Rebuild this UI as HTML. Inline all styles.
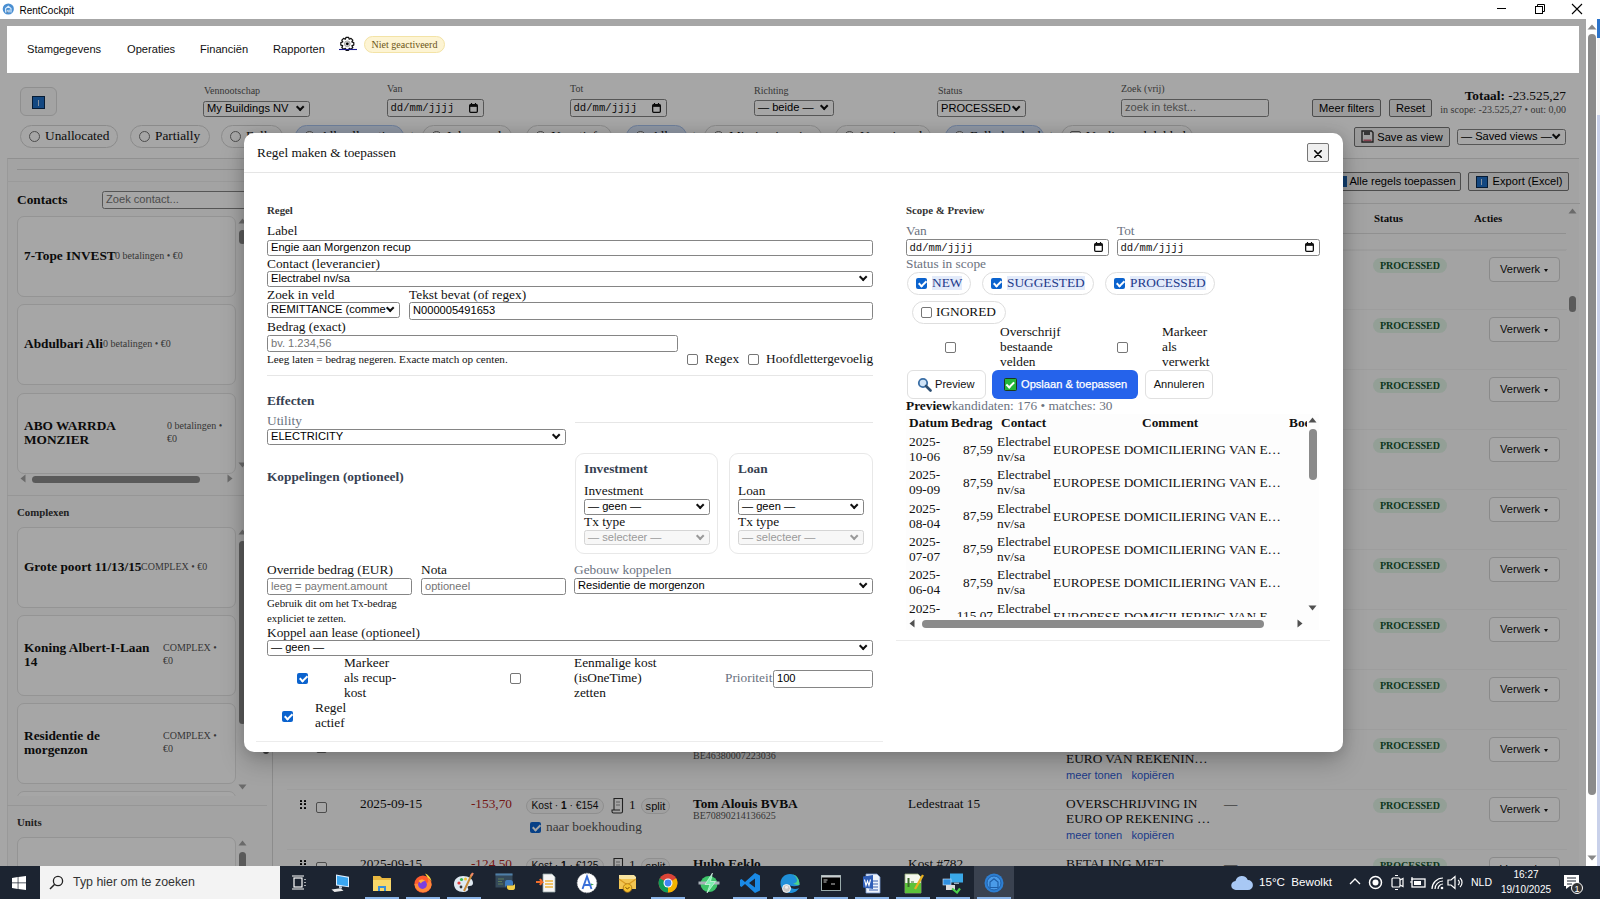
<!DOCTYPE html><html><head><meta charset="utf-8"><style>
*{box-sizing:border-box;margin:0;padding:0}
html,body{width:1600px;height:899px;overflow:hidden;background:#fff;font-family:"Liberation Serif",serif;color:#111}
.a{position:absolute;white-space:nowrap}
.sans{font-family:"Liberation Sans",sans-serif}
.mono{font-family:"Liberation Mono",monospace}
.inp{position:absolute;border:1px solid #858585;border-radius:2.5px;background:#fff;font-family:"Liberation Sans",sans-serif;font-size:11.11px;color:#000;white-space:nowrap;overflow:hidden;padding-left:3px}
.sel::after{content:"";position:absolute;right:5.5px;top:50%;margin-top:-4.8px;width:4.4px;height:4.4px;border-right:2.1px solid #111;border-bottom:2.1px solid #111;transform:rotate(45deg)}
.dis{border-color:#d5d5d5;background:#f7f7f7;color:#9a9a9a}
.dis::after{border-color:#9a9a9a}
.ph{color:#757575}
.lbl{position:absolute;font-size:13.33px;line-height:15px;white-space:nowrap}
.btn{position:absolute;border:1px solid #767676;border-radius:2px;background:#efefef;font-family:"Liberation Sans",sans-serif;font-size:11.11px;text-align:center;white-space:nowrap;color:#000}
.cb{position:absolute;width:11px;height:11px;border:1px solid #767676;border-radius:2px;background:#fff}
.cbc{position:absolute;width:11px;height:11px;border-radius:2px;background:#0b63ce}
.cbc::after{content:"";position:absolute;left:3.5px;top:1px;width:3.2px;height:6.2px;border-right:2.1px solid #fff;border-bottom:2.1px solid #fff;transform:rotate(45deg)}
.pill{position:absolute;border:1px solid #d6d6d6;border-radius:12px;background:#fff}
.radio{position:absolute;width:11px;height:11px;border:1px solid #767676;border-radius:50%;background:#fff}
.card{position:absolute;border:1px solid #e3e3e3;border-radius:7px;background:#fff}
.badge{position:absolute;background:#e2f4e7;color:#14532d;border-radius:8px;font-size:10px;font-weight:bold;text-align:center;line-height:15px}
.vbtn{position:absolute;border:1px solid #d4d4d4;border-radius:4px;background:#fff;font-family:"Liberation Sans",sans-serif;font-size:11.11px;color:#111}

</style></head><body><div class="a" style="left:0;top:0;width:1586px;height:866px;background:#fff;overflow:hidden">
<div class="a" style="left:7px;top:158px;width:1572px;height:708px;background:#fbfbfb;border-top:1px solid #dedede;border-left:1px solid #ececec"></div>
<div class="a" style="left:20px;top:87px;width:37px;height:29px;background:#fafafa;border:1px solid #dcdcdc;border-radius:6px"></div>
<div class="a" style="left:32px;top:96px;width:13px;height:13px;background:#1f6fc6;border:1px solid #0a2a50"></div>
<div class="a" style="left:38px;top:100px;width:1px;height:6px;background:#cfe0f5"></div>
<div class="a" style="left:204px;top:84.7px;font-size:10px;line-height:12px;color:#555;font-weight:normal;">Vennootschap</div>
<div class="inp sel" style="left:203px;top:101px;width:107px;height:16px;line-height:13px;">My Buildings NV</div>
<div class="a" style="left:387px;top:83.2px;font-size:10px;line-height:12px;color:#555;font-weight:normal;">Van</div>
<div class="inp date" style="left:387px;top:99px;width:97px;height:18px;line-height:15px;padding-left:2.5px"><span class="mono" style="font-size:10.6px;color:#111">dd/mm/jjjj</span><svg class="a" style="right:5px;top:50%;margin-top:-5.5px" width="9" height="10" viewBox="0 0 9 10"><path d="M2.5 0v2M6.5 0v2" stroke="#111" stroke-width="1.2"/><rect x=".65" y="1.65" width="7.7" height="7.7" rx="1" fill="none" stroke="#111" stroke-width="1.3"/><rect x=".65" y="1.65" width="7.7" height="2.2" fill="#111"/></svg></div>
<div class="a" style="left:570px;top:83.2px;font-size:10px;line-height:12px;color:#555;font-weight:normal;">Tot</div>
<div class="inp date" style="left:570px;top:99px;width:97px;height:18px;line-height:15px;padding-left:2.5px"><span class="mono" style="font-size:10.6px;color:#111">dd/mm/jjjj</span><svg class="a" style="right:5px;top:50%;margin-top:-5.5px" width="9" height="10" viewBox="0 0 9 10"><path d="M2.5 0v2M6.5 0v2" stroke="#111" stroke-width="1.2"/><rect x=".65" y="1.65" width="7.7" height="7.7" rx="1" fill="none" stroke="#111" stroke-width="1.3"/><rect x=".65" y="1.65" width="7.7" height="2.2" fill="#111"/></svg></div>
<div class="a" style="left:754px;top:84.7px;font-size:10px;line-height:12px;color:#555;font-weight:normal;">Richting</div>
<div class="inp sel" style="left:754px;top:100px;width:80px;height:16px;line-height:13px;">— beide —</div>
<div class="a" style="left:938px;top:84.7px;font-size:10px;line-height:12px;color:#555;font-weight:normal;">Status</div>
<div class="inp sel" style="left:937px;top:100px;width:89px;height:17px;line-height:14px;">PROCESSED</div>
<div class="a" style="left:1121px;top:83.2px;font-size:10px;line-height:12px;color:#555;font-weight:normal;">Zoek (vrij)</div>
<div class="inp " style="left:1121px;top:99px;width:148px;height:18px;line-height:15px;"><span class="ph">zoek in tekst...</span></div>
<div class="btn" style="left:1312px;top:99px;width:69px;height:18px;line-height:16px">Meer filters</div>
<div class="btn" style="left:1389px;top:99px;width:43px;height:18px;line-height:16px">Reset</div>
<div class="a" style="left:1380px;top:88px;width:186px;text-align:right;font-size:13.33px;line-height:16px;color:#111"><b>Totaal:</b> -23.525,27</div>
<div class="a" style="left:1380px;top:103px;width:186px;text-align:right;font-size:10px;line-height:13px;color:#555">in scope: -23.525,27 • out: 0,00</div>
<div class="pill" style="left:20px;top:125px;width:98px;height:23px;"></div>
<div class="radio" style="left:29px;top:131px"></div>
<div class="a" style="left:45px;top:128.2px;font-size:13.33px;line-height:15px;color:#111;font-weight:normal;">Unallocated</div>
<div class="pill" style="left:130px;top:125px;width:80px;height:23px;"></div>
<div class="radio" style="left:139px;top:131px"></div>
<div class="a" style="left:155px;top:128.2px;font-size:13.33px;line-height:15px;color:#111;font-weight:normal;">Partially</div>
<div class="pill" style="left:221px;top:125px;width:62px;height:23px;"></div>
<div class="radio" style="left:230px;top:131px"></div>
<div class="a" style="left:246px;top:128.2px;font-size:13.33px;line-height:15px;color:#111;font-weight:normal;">Fully</div>
<div class="pill" style="left:295px;top:125px;width:109px;height:23px;background:#dbe7fb;border-color:#a9c3ee;"></div>
<div class="radio" style="left:304px;top:131px"></div>
<div class="a" style="left:320px;top:128.2px;font-size:13.33px;line-height:15px;color:#111;font-weight:normal;">Alle allocaties</div>
<div class="a" style="left:411px;top:128.7px;font-size:11px;line-height:13px;color:#777;font-weight:normal;">|</div>
<div class="pill" style="left:422px;top:125px;width:90px;height:23px;"></div>
<div class="radio" style="left:431px;top:131px"></div>
<div class="a" style="left:447px;top:128.2px;font-size:13.33px;line-height:15px;color:#111;font-weight:normal;">Inkomend</div>
<div class="pill" style="left:526px;top:125px;width:86px;height:23px;"></div>
<div class="radio" style="left:535px;top:131px"></div>
<div class="a" style="left:551px;top:128.2px;font-size:13.33px;line-height:15px;color:#111;font-weight:normal;">Negatief</div>
<div class="pill" style="left:626px;top:125px;width:61px;height:23px;background:#dbe7fb;border-color:#a9c3ee;"></div>
<div class="radio" style="left:635px;top:131px"></div>
<div class="a" style="left:651px;top:128.2px;font-size:13.33px;line-height:15px;color:#111;font-weight:normal;">Alle</div>
<div class="a" style="left:693px;top:128.7px;font-size:11px;line-height:13px;color:#777;font-weight:normal;">|</div>
<div class="pill" style="left:704px;top:125px;width:118px;height:23px;"></div>
<div class="radio" style="left:713px;top:131px"></div>
<div class="a" style="left:729px;top:128.2px;font-size:13.33px;line-height:15px;color:#111;font-weight:normal;">Missing invoice</div>
<div class="pill" style="left:835px;top:125px;width:96px;height:23px;"></div>
<div class="radio" style="left:844px;top:131px"></div>
<div class="a" style="left:860px;top:128.2px;font-size:13.33px;line-height:15px;color:#111;font-weight:normal;">Unassigned</div>
<div class="pill" style="left:945px;top:125px;width:99px;height:23px;background:#dbe7fb;border-color:#a9c3ee;"></div>
<div class="radio" style="left:954px;top:131px"></div>
<div class="a" style="left:970px;top:128.2px;font-size:13.33px;line-height:15px;color:#111;font-weight:normal;">Fully booked</div>
<div class="a" style="left:1050px;top:128.7px;font-size:11px;line-height:13px;color:#777;font-weight:normal;">|</div>
<div class="pill" style="left:1061px;top:125px;width:132px;height:23px"></div>
<div class="cb" style="left:1070px;top:131px"></div>
<div class="a" style="left:1086px;top:128.2px;font-size:13.33px;line-height:15px;color:#111;font-weight:normal;">Verdienend dubbel</div>
<div class="btn" style="left:1354px;top:127px;width:96px;height:20px;line-height:18px;padding-left:16px">Save as view</div>
<svg class="a" style="left:1361px;top:130px" width="13" height="13" viewBox="0 0 13 13"><path d="M1 1h9.5L12 2.5V12H1z" fill="#f4f4f4" stroke="#333" stroke-width="1.4"/><rect x="3" y="1" width="6" height="4" fill="#555"/><rect x="2.5" y="9.5" width="8" height="1.6" fill="#d0667a"/></svg>
<div class="inp sel" style="left:1457px;top:129px;width:109px;height:16px;line-height:13px;">— Saved views —</div>
<div class="a" style="left:17px;top:169px;width:255px;height:1px;background:#dadada"></div>
<div class="a" style="left:7px;top:181px;width:265px;height:1px;background:#ededed"></div>
<div class="a" style="left:272px;top:181px;width:1px;height:685px;background:#d8d8d8"></div>
<div class="a" style="left:17px;top:192.2px;font-size:13.33px;line-height:15px;color:#111;font-weight:bold;">Contacts</div>
<div class="inp " style="left:102px;top:191px;width:160px;height:18px;line-height:15px;"><span class="ph">Zoek contact...</span></div>
<div class="card" style="left:17px;top:216px;width:219px;height:81px"></div>
<div class="a" style="left:24px;top:248.2px;font-size:13.33px;line-height:15px;color:#111;font-weight:bold;">7-Tope INVEST</div>
<div class="a" style="left:115px;top:249.7px;font-size:10px;line-height:12px;color:#555;font-weight:normal;">0 betalingen • €0</div>
<div class="card" style="left:17px;top:304px;width:219px;height:81px"></div>
<div class="a" style="left:24px;top:336.2px;font-size:13.33px;line-height:15px;color:#111;font-weight:bold;">Abdulbari Ali</div>
<div class="a" style="left:103px;top:337.7px;font-size:10px;line-height:12px;color:#555;font-weight:normal;">0 betalingen • €0</div>
<div class="card" style="left:17px;top:393px;width:219px;height:81px"></div>
<div class="a" style="left:24px;top:417.7px;font-size:13.33px;line-height:15px;color:#111;font-weight:bold;">ABO WARRDA</div>
<div class="a" style="left:24px;top:432.2px;font-size:13.33px;line-height:15px;color:#111;font-weight:bold;">MONZIER</div>
<div class="a" style="left:167px;top:419.7px;font-size:10px;line-height:12px;color:#555;font-weight:normal;">0 betalingen •</div>
<div class="a" style="left:167px;top:432.7px;font-size:10px;line-height:12px;color:#555;font-weight:normal;">€0</div>
<svg class="a" style="left:238px;top:218px" width="9" height="6"><path d="M0.5 5.5L4.5 0.5L8.5 5.5z" fill="#a3a3a3"/></svg>
<div class="a" style="left:239px;top:230px;width:7px;height:14px;background:#8a8a8a;border-radius:4px"></div>
<svg class="a" style="left:238px;top:462px" width="9" height="6"><path d="M0.5 0.5L4.5 5.5L8.5 0.5z" fill="#a3a3a3"/></svg>
<svg class="a" style="left:20px;top:474px" width="6" height="9"><path d="M5.5 0.5L0.5 4.5L5.5 8.5z" fill="#a3a3a3"/></svg>
<div class="a" style="left:32px;top:476px;width:168px;height:7px;background:#8a8a8a;border-radius:4px"></div>
<svg class="a" style="left:227px;top:474px" width="6" height="9"><path d="M0.5 0.5L5.5 4.5L0.5 8.5z" fill="#a3a3a3"/></svg>
<div class="a" style="left:7px;top:495px;width:260px;height:1px;background:#e6e6e6"></div>
<div class="a" style="left:17px;top:505.7px;font-size:10.83px;line-height:12px;color:#333;font-weight:bold;">Complexen</div>
<div class="card" style="left:17px;top:527px;width:219px;height:81px"></div>
<div class="a" style="left:24px;top:559.2px;font-size:13.33px;line-height:15px;color:#111;font-weight:bold;">Grote poort 11/13/15</div>
<div class="a" style="left:141px;top:560.7px;font-size:10px;line-height:12px;color:#555;font-weight:normal;">COMPLEX • €0</div>
<div class="card" style="left:17px;top:615px;width:219px;height:81px"></div>
<div class="a" style="left:24px;top:639.7px;font-size:13.33px;line-height:15px;color:#111;font-weight:bold;">Koning Albert-I-Laan</div>
<div class="a" style="left:24px;top:654.2px;font-size:13.33px;line-height:15px;color:#111;font-weight:bold;">14</div>
<div class="a" style="left:163px;top:641.7px;font-size:10px;line-height:12px;color:#555;font-weight:normal;">COMPLEX •</div>
<div class="a" style="left:163px;top:654.7px;font-size:10px;line-height:12px;color:#555;font-weight:normal;">€0</div>
<div class="card" style="left:17px;top:703px;width:219px;height:81px"></div>
<div class="a" style="left:24px;top:727.7px;font-size:13.33px;line-height:15px;color:#111;font-weight:bold;">Residentie de</div>
<div class="a" style="left:24px;top:742.2px;font-size:13.33px;line-height:15px;color:#111;font-weight:bold;">morgenzon</div>
<div class="a" style="left:163px;top:729.7px;font-size:10px;line-height:12px;color:#555;font-weight:normal;">COMPLEX •</div>
<div class="a" style="left:163px;top:742.7px;font-size:10px;line-height:12px;color:#555;font-weight:normal;">€0</div>
<div class="a" style="left:17px;top:791px;width:219px;height:5px;overflow:hidden"><div class="card" style="left:0;top:0;width:219px;height:40px"></div></div>
<svg class="a" style="left:238px;top:529px" width="9" height="6"><path d="M0.5 5.5L4.5 0.5L8.5 5.5z" fill="#a3a3a3"/></svg>
<div class="a" style="left:239px;top:541px;width:7px;height:183px;background:#8a8a8a;border-radius:4px"></div>
<svg class="a" style="left:238px;top:784px" width="9" height="6"><path d="M0.5 0.5L4.5 5.5L8.5 0.5z" fill="#a3a3a3"/></svg>
<div class="a" style="left:7px;top:805px;width:260px;height:1px;background:#e6e6e6"></div>
<div class="a" style="left:263px;top:690px;width:6px;height:64px;background:#5c5c5c;border-radius:3px"></div>
<div class="a" style="left:17px;top:816.2px;font-size:10.83px;line-height:12px;color:#333;font-weight:bold;">Units</div>
<div class="card" style="left:17px;top:837px;width:219px;height:60px"></div>
<svg class="a" style="left:238px;top:840px" width="9" height="6"><path d="M0.5 5.5L4.5 0.5L8.5 5.5z" fill="#a3a3a3"/></svg>
<div class="a" style="left:239px;top:852px;width:7px;height:20px;background:#8a8a8a;border-radius:4px"></div>
<div class="btn" style="left:1330px;top:172px;width:131px;height:19px;line-height:17px;padding-left:14px">Alle regels toepassen</div>
<div class="a" style="left:1337px;top:176px;width:10px;height:11px;background:#1b5fa8"></div>
<div class="btn" style="left:1468px;top:172px;width:101px;height:19px;line-height:17px;padding-left:18px">Export (Excel)</div>
<div class="a" style="left:1476px;top:176px;width:12px;height:12px;background:#1f6fc6;border:1px solid #0a2a50"></div>
<div class="a" style="left:1481px;top:179px;width:1px;height:6px;background:#cfe0f5"></div>
<div class="a" style="left:1343px;top:203px;width:237px;height:1px;background:#dedede"></div>
<div class="a" style="left:282px;top:233px;width:1284px;height:1px;background:#dedede"></div>
<div class="a" style="left:1374px;top:211.7px;font-size:10.83px;line-height:12px;color:#111;font-weight:bold;">Status</div>
<div class="a" style="left:1474px;top:211.7px;font-size:10.83px;line-height:12px;color:#111;font-weight:bold;">Acties</div>
<svg class="a" style="left:1568px;top:208px" width="9" height="6"><path d="M0.5 5.5L4.5 0.5L8.5 5.5z" fill="#a3a3a3"/></svg>
<div class="a" style="left:1569px;top:296px;width:7px;height:16px;background:#8a8a8a;border-radius:4px"></div>
<div class="a" style="left:282px;top:250px;width:1284px;height:1px;background:#f0f0f0"></div>
<div class="a" style="left:287px;top:249px;width:1280px;height:1px;background:#f1f1f1"></div>
<div class="badge" style="left:1373px;top:258px;width:74px;height:15px">PROCESSED</div>
<div class="vbtn" style="left:1489px;top:257px;width:71px;height:25px;line-height:23px;padding-left:10px">Verwerk</div>
<div class="a" style="left:1544px;top:268.5px;width:0px;height:0px;border-left:2.5px solid transparent;border-right:2.5px solid transparent;border-top:3px solid #111"></div>
<div class="a" style="left:287px;top:309px;width:1280px;height:1px;background:#f1f1f1"></div>
<div class="badge" style="left:1373px;top:318px;width:74px;height:15px">PROCESSED</div>
<div class="vbtn" style="left:1489px;top:317px;width:71px;height:25px;line-height:23px;padding-left:10px">Verwerk</div>
<div class="a" style="left:1544px;top:328.5px;width:0px;height:0px;border-left:2.5px solid transparent;border-right:2.5px solid transparent;border-top:3px solid #111"></div>
<div class="a" style="left:287px;top:369px;width:1280px;height:1px;background:#f1f1f1"></div>
<div class="badge" style="left:1373px;top:378px;width:74px;height:15px">PROCESSED</div>
<div class="vbtn" style="left:1489px;top:377px;width:71px;height:25px;line-height:23px;padding-left:10px">Verwerk</div>
<div class="a" style="left:1544px;top:388.5px;width:0px;height:0px;border-left:2.5px solid transparent;border-right:2.5px solid transparent;border-top:3px solid #111"></div>
<div class="a" style="left:287px;top:429px;width:1280px;height:1px;background:#f1f1f1"></div>
<div class="badge" style="left:1373px;top:438px;width:74px;height:15px">PROCESSED</div>
<div class="vbtn" style="left:1489px;top:437px;width:71px;height:25px;line-height:23px;padding-left:10px">Verwerk</div>
<div class="a" style="left:1544px;top:448.5px;width:0px;height:0px;border-left:2.5px solid transparent;border-right:2.5px solid transparent;border-top:3px solid #111"></div>
<div class="a" style="left:287px;top:489px;width:1280px;height:1px;background:#f1f1f1"></div>
<div class="badge" style="left:1373px;top:498px;width:74px;height:15px">PROCESSED</div>
<div class="vbtn" style="left:1489px;top:497px;width:71px;height:25px;line-height:23px;padding-left:10px">Verwerk</div>
<div class="a" style="left:1544px;top:508.5px;width:0px;height:0px;border-left:2.5px solid transparent;border-right:2.5px solid transparent;border-top:3px solid #111"></div>
<div class="a" style="left:287px;top:549px;width:1280px;height:1px;background:#f1f1f1"></div>
<div class="badge" style="left:1373px;top:558px;width:74px;height:15px">PROCESSED</div>
<div class="vbtn" style="left:1489px;top:557px;width:71px;height:25px;line-height:23px;padding-left:10px">Verwerk</div>
<div class="a" style="left:1544px;top:568.5px;width:0px;height:0px;border-left:2.5px solid transparent;border-right:2.5px solid transparent;border-top:3px solid #111"></div>
<div class="a" style="left:287px;top:609px;width:1280px;height:1px;background:#f1f1f1"></div>
<div class="badge" style="left:1373px;top:618px;width:74px;height:15px">PROCESSED</div>
<div class="vbtn" style="left:1489px;top:617px;width:71px;height:25px;line-height:23px;padding-left:10px">Verwerk</div>
<div class="a" style="left:1544px;top:628.5px;width:0px;height:0px;border-left:2.5px solid transparent;border-right:2.5px solid transparent;border-top:3px solid #111"></div>
<div class="a" style="left:287px;top:669px;width:1280px;height:1px;background:#f1f1f1"></div>
<div class="badge" style="left:1373px;top:678px;width:74px;height:15px">PROCESSED</div>
<div class="vbtn" style="left:1489px;top:677px;width:71px;height:25px;line-height:23px;padding-left:10px">Verwerk</div>
<div class="a" style="left:1544px;top:688.5px;width:0px;height:0px;border-left:2.5px solid transparent;border-right:2.5px solid transparent;border-top:3px solid #111"></div>
<div class="a" style="left:287px;top:729px;width:1280px;height:1px;background:#f1f1f1"></div>
<div class="badge" style="left:1373px;top:738px;width:74px;height:15px">PROCESSED</div>
<div class="vbtn" style="left:1489px;top:737px;width:71px;height:25px;line-height:23px;padding-left:10px">Verwerk</div>
<div class="a" style="left:1544px;top:748.5px;width:0px;height:0px;border-left:2.5px solid transparent;border-right:2.5px solid transparent;border-top:3px solid #111"></div>
<div class="a" style="left:287px;top:789px;width:1280px;height:1px;background:#f1f1f1"></div>
<div class="badge" style="left:1373px;top:798px;width:74px;height:15px">PROCESSED</div>
<div class="vbtn" style="left:1489px;top:797px;width:71px;height:25px;line-height:23px;padding-left:10px">Verwerk</div>
<div class="a" style="left:1544px;top:808.5px;width:0px;height:0px;border-left:2.5px solid transparent;border-right:2.5px solid transparent;border-top:3px solid #111"></div>
<div class="a" style="left:287px;top:849px;width:1280px;height:1px;background:#f1f1f1"></div>
<div class="badge" style="left:1373px;top:858px;width:74px;height:15px">PROCESSED</div>
<div class="vbtn" style="left:1489px;top:857px;width:71px;height:25px;line-height:23px;padding-left:10px">Verwerk</div>
<div class="a" style="left:1544px;top:868.5px;width:0px;height:0px;border-left:2.5px solid transparent;border-right:2.5px solid transparent;border-top:3px solid #111"></div>
<div class="a" style="left:300px;top:739.8px;width:7px;height:11px"><div class="a" style="left:0.2px;top:0px;width:2px;height:2px;background:#000;border-radius:.6px"></div><div class="a" style="left:0.2px;top:3.7px;width:2px;height:2px;background:#000;border-radius:.6px"></div><div class="a" style="left:0.2px;top:7.4px;width:2px;height:2px;background:#000;border-radius:.6px"></div><div class="a" style="left:3.9px;top:0px;width:2px;height:2px;background:#000;border-radius:.6px"></div><div class="a" style="left:3.9px;top:3.7px;width:2px;height:2px;background:#000;border-radius:.6px"></div><div class="a" style="left:3.9px;top:7.4px;width:2px;height:2px;background:#000;border-radius:.6px"></div></div>
<div class="cb" style="left:316px;top:742px"></div>
<div class="a" style="left:360px;top:735.7px;font-size:13.33px;line-height:15px;color:#111;font-weight:normal;">2025-09-15</div>
<div class="a" style="left:440px;top:736px;width:72px;text-align:right;font-size:13.33px;line-height:15px;color:#b3261e">-87,59</div>
<div class="a" style="left:693px;top:735.7px;font-size:13.33px;line-height:15px;color:#111;font-weight:bold;">Electrabel nv/sa</div>
<div class="a" style="left:693px;top:750.2px;font-size:10px;line-height:12px;color:#555;font-weight:normal;">BE46380007223036</div>
<div class="a" style="left:908px;top:735.7px;font-size:13.33px;line-height:15px;color:#111;font-weight:normal;">Kost #780</div>
<div class="a" style="left:1066px;top:735.7px;font-size:13.33px;line-height:15px;color:#111;font-weight:normal;">EUROPESE DOMICILIERING IN</div>
<div class="a" style="left:1066px;top:750.7px;font-size:13.33px;line-height:15px;color:#111;font-weight:normal;">EURO VAN REKENIN…</div>
<div class="a sans" style="left:1066px;top:768px;font-size:11.11px;line-height:14px;color:#2f5bd3">meer tonen&nbsp;&nbsp; kopiëren</div>
<div class="a" style="left:1224px;top:735.7px;font-size:13.33px;line-height:15px;color:#111;font-weight:normal;">—</div>
<div class="a" style="left:300px;top:799.8px;width:7px;height:11px"><div class="a" style="left:0.2px;top:0px;width:2px;height:2px;background:#000;border-radius:.6px"></div><div class="a" style="left:0.2px;top:3.7px;width:2px;height:2px;background:#000;border-radius:.6px"></div><div class="a" style="left:0.2px;top:7.4px;width:2px;height:2px;background:#000;border-radius:.6px"></div><div class="a" style="left:3.9px;top:0px;width:2px;height:2px;background:#000;border-radius:.6px"></div><div class="a" style="left:3.9px;top:3.7px;width:2px;height:2px;background:#000;border-radius:.6px"></div><div class="a" style="left:3.9px;top:7.4px;width:2px;height:2px;background:#000;border-radius:.6px"></div></div>
<div class="cb" style="left:316px;top:802px"></div>
<div class="a" style="left:360px;top:795.7px;font-size:13.33px;line-height:15px;color:#111;font-weight:normal;">2025-09-15</div>
<div class="a" style="left:440px;top:796px;width:72px;text-align:right;font-size:13.33px;line-height:15px;color:#b3261e">-153,70</div>
<div class="a sans" style="left:526px;top:798px;width:78px;height:16px;border:1px solid #dcdcdc;border-radius:8px;background:#f6f6f6;font-size:10.2px;line-height:14px;text-align:center;color:#111">Kost · <b>1</b> · €154</div>
<svg class="a" style="left:611px;top:797px" width="13" height="17" viewBox="0 0 13 17"><path d="M3 1.5h8.5v13a1.5 1.5 0 0 1-1.5 1.5H2.5a1.5 1.5 0 0 1-1.5-1.5V13h2zM1 13h8" fill="none" stroke="#333" stroke-width="1.1"/><path d="M5 5h4M5 8h4" stroke="#777" stroke-width=".8"/></svg>
<div class="a" style="left:629px;top:796.7px;font-size:13.33px;line-height:15px;color:#111;font-weight:normal;">1</div>
<div class="a sans" style="left:641px;top:798px;width:29px;height:16px;border:1px solid #dcdcdc;border-radius:8px;background:#f6f6f6;font-size:11.11px;line-height:14px;text-align:center;color:#111">split</div>
<div class="cbc" style="left:530px;top:822px"></div>
<div class="a" style="left:546px;top:818.7px;font-size:13.33px;line-height:15px;color:#555;font-weight:normal;">naar boekhouding</div>
<div class="a" style="left:693px;top:795.7px;font-size:13.33px;line-height:15px;color:#111;font-weight:bold;">Tom Alouis BVBA</div>
<div class="a" style="left:693px;top:810.2px;font-size:10px;line-height:12px;color:#555;font-weight:normal;">BE70890214136625</div>
<div class="a" style="left:908px;top:795.7px;font-size:13.33px;line-height:15px;color:#111;font-weight:normal;">Ledestraat 15</div>
<div class="a" style="left:1066px;top:795.7px;font-size:13.33px;line-height:15px;color:#111;font-weight:normal;">OVERSCHRIJVING IN</div>
<div class="a" style="left:1066px;top:810.7px;font-size:13.33px;line-height:15px;color:#111;font-weight:normal;">EURO OP REKENING …</div>
<div class="a sans" style="left:1066px;top:828px;font-size:11.11px;line-height:14px;color:#2f5bd3">meer tonen&nbsp;&nbsp; kopiëren</div>
<div class="a" style="left:1224px;top:795.7px;font-size:13.33px;line-height:15px;color:#111;font-weight:normal;">—</div>
<div class="a" style="left:300px;top:859.8px;width:7px;height:11px"><div class="a" style="left:0.2px;top:0px;width:2px;height:2px;background:#000;border-radius:.6px"></div><div class="a" style="left:0.2px;top:3.7px;width:2px;height:2px;background:#000;border-radius:.6px"></div><div class="a" style="left:0.2px;top:7.4px;width:2px;height:2px;background:#000;border-radius:.6px"></div><div class="a" style="left:3.9px;top:0px;width:2px;height:2px;background:#000;border-radius:.6px"></div><div class="a" style="left:3.9px;top:3.7px;width:2px;height:2px;background:#000;border-radius:.6px"></div><div class="a" style="left:3.9px;top:7.4px;width:2px;height:2px;background:#000;border-radius:.6px"></div></div>
<div class="cb" style="left:316px;top:862px"></div>
<div class="a" style="left:360px;top:855.7px;font-size:13.33px;line-height:15px;color:#111;font-weight:normal;">2025-09-15</div>
<div class="a" style="left:440px;top:856px;width:72px;text-align:right;font-size:13.33px;line-height:15px;color:#b3261e">-124,50</div>
<div class="a sans" style="left:526px;top:858px;width:78px;height:16px;border:1px solid #dcdcdc;border-radius:8px;background:#f6f6f6;font-size:10.2px;line-height:14px;text-align:center;color:#111">Kost · <b>1</b> · €125</div>
<svg class="a" style="left:611px;top:857px" width="13" height="17" viewBox="0 0 13 17"><path d="M3 1.5h8.5v13a1.5 1.5 0 0 1-1.5 1.5H2.5a1.5 1.5 0 0 1-1.5-1.5V13h2zM1 13h8" fill="none" stroke="#333" stroke-width="1.1"/><path d="M5 5h4M5 8h4" stroke="#777" stroke-width=".8"/></svg>
<div class="a" style="left:629px;top:856.7px;font-size:13.33px;line-height:15px;color:#111;font-weight:normal;">1</div>
<div class="a sans" style="left:641px;top:858px;width:29px;height:16px;border:1px solid #dcdcdc;border-radius:8px;background:#f6f6f6;font-size:11.11px;line-height:14px;text-align:center;color:#111">split</div>
<div class="cbc" style="left:530px;top:882px"></div>
<div class="a" style="left:546px;top:878.7px;font-size:13.33px;line-height:15px;color:#555;font-weight:normal;">naar boekhouding</div>
<div class="a" style="left:693px;top:855.7px;font-size:13.33px;line-height:15px;color:#111;font-weight:bold;">Hubo Eeklo</div>
<div class="a" style="left:693px;top:870.2px;font-size:10px;line-height:12px;color:#555;font-weight:normal;">BE00000000000000</div>
<div class="a" style="left:908px;top:855.7px;font-size:13.33px;line-height:15px;color:#111;font-weight:normal;">Kost #782</div>
<div class="a" style="left:1066px;top:855.7px;font-size:13.33px;line-height:15px;color:#111;font-weight:normal;">BETALING MET</div>
<div class="a" style="left:1066px;top:870.7px;font-size:13.33px;line-height:15px;color:#111;font-weight:normal;">BANKKAART …</div>
<div class="a sans" style="left:1066px;top:888px;font-size:11.11px;line-height:14px;color:#2f5bd3">meer tonen&nbsp;&nbsp; kopiëren</div>
<div class="a" style="left:1224px;top:855.7px;font-size:13.33px;line-height:15px;color:#111;font-weight:normal;">—</div>
</div>
<div class="a" style="left:0px;top:19px;width:1586px;height:847px;background:rgba(0,0,0,.35)"></div>
<div class="a" style="left:7px;top:26px;width:1572px;height:47px;background:#fff"></div>
<div class="a" style="left:27px;top:43.2px;font-size:11.11px;line-height:13px;color:#111;font-weight:normal;font-family:'Liberation Sans',sans-serif;">Stamgegevens</div>
<div class="a" style="left:127px;top:43.2px;font-size:11.11px;line-height:13px;color:#111;font-weight:normal;font-family:'Liberation Sans',sans-serif;">Operaties</div>
<div class="a" style="left:200px;top:43.2px;font-size:11.11px;line-height:13px;color:#111;font-weight:normal;font-family:'Liberation Sans',sans-serif;">Financiën</div>
<div class="a" style="left:273px;top:43.2px;font-size:11.11px;line-height:13px;color:#111;font-weight:normal;font-family:'Liberation Sans',sans-serif;">Rapporten</div>
<svg class="a" style="left:338px;top:35px" width="20" height="16" viewBox="0 0 20 16"><g transform="translate(9.3 8.8)"><path d="M4.64 -1.87 L6.48 -1.26 L6.48 1.26 L4.64 1.87 L4.60 1.95 L5.47 3.69 L3.69 5.47 L1.95 4.60 L1.87 4.64 L1.26 6.48 L-1.26 6.48 L-1.87 4.64 L-1.95 4.60 L-3.69 5.47 L-5.47 3.69 L-4.60 1.95 L-4.64 1.87 L-6.48 1.26 L-6.48 -1.26 L-4.64 -1.87 L-4.60 -1.95 L-5.47 -3.69 L-3.69 -5.47 L-1.95 -4.60 L-1.87 -4.64 L-1.26 -6.48 L1.26 -6.48 L1.87 -4.64 L1.95 -4.60 L3.69 -5.47 L5.47 -3.69 L4.60 -1.95z" fill="#fff" stroke="#111" stroke-width="1.25" stroke-linejoin="round"/><circle r="2.9" fill="#d4d4d4" stroke="#8a8a8a" stroke-width=".7"/><circle r="1.4" fill="#000"/></g><path d="M1 14.5h18" stroke="#1a1a8c" stroke-width="1.1"/></svg>
<div class="a" style="left:364px;top:36px;width:81px;height:17px;background:#fdf4d3;border:1px solid #f3e3a6;border-radius:9px;font-size:10px;line-height:15px;text-align:center;color:#6b5416">Niet geactiveerd</div>
<div class="a" style="left:244px;top:133px;width:1099px;height:619px;background:#fff;border-radius:10px;box-shadow:0 10px 24px rgba(0,0,0,.22),0 0 14px rgba(0,0,0,.12)"></div>
<div class="a" style="left:257px;top:144.7px;font-size:13.33px;line-height:15px;color:#111;font-weight:normal;">Regel maken &amp; toepassen</div>
<div class="a sans" style="left:1307px;top:143px;width:22px;height:19px;border:1px solid #767676;border-radius:2px;background:#efefef;"></div>
<svg class="a" style="left:1314px;top:149.5px" width="8" height="8" viewBox="0 0 8 8"><path d="M.8.8L7.2 7.2M7.2.8L.8 7.2" stroke="#000" stroke-width="1.6" stroke-linecap="round"/></svg>
<div class="a" style="left:244px;top:172px;width:1098px;height:1px;background:#e5e5e5"></div>
<div class="a" style="left:267px;top:203.7px;font-size:10.83px;line-height:12px;color:#333;font-weight:bold;">Regel</div>
<div class="a" style="left:267px;top:222.7px;font-size:13.33px;line-height:15px;color:#111;font-weight:normal;">Label</div>
<div class="inp " style="left:267px;top:240px;width:606px;height:16px;line-height:13px;">Engie aan Morgenzon recup</div>
<div class="a" style="left:267px;top:255.7px;font-size:13.33px;line-height:15px;color:#111;font-weight:normal;">Contact (leverancier)</div>
<div class="inp sel" style="left:267px;top:271px;width:606px;height:16px;line-height:13px;">Electrabel nv/sa</div>
<div class="a" style="left:267px;top:286.7px;font-size:13.33px;line-height:15px;color:#111;font-weight:normal;">Zoek in veld</div>
<div class="a" style="left:409px;top:286.7px;font-size:13.33px;line-height:15px;color:#111;font-weight:normal;">Tekst bevat (of regex)</div>
<div class="inp sel" style="left:267px;top:302px;width:133px;height:16px;line-height:13px;">REMITTANCE (comme</div>
<div class="inp " style="left:409px;top:302px;width:464px;height:18px;line-height:15px;">N000005491653</div>
<div class="a" style="left:267px;top:318.7px;font-size:13.33px;line-height:15px;color:#111;font-weight:normal;">Bedrag (exact)</div>
<div class="inp " style="left:267px;top:335px;width:411px;height:17px;line-height:14px;"><span class="ph">bv. 1.234,56</span></div>
<div class="a" style="left:267px;top:353.2px;font-size:11.11px;line-height:13px;color:#111;font-weight:normal;">Leeg laten = bedrag negeren. Exacte match op centen.</div>
<div class="cb" style="left:687px;top:354px"></div>
<div class="a" style="left:705px;top:351.2px;font-size:13.33px;line-height:15px;color:#111;font-weight:normal;">Regex</div>
<div class="cb" style="left:748px;top:354px"></div>
<div class="a" style="left:766px;top:351.2px;font-size:13.33px;line-height:15px;color:#111;font-weight:normal;">Hoofdlettergevoelig</div>
<div class="a" style="left:267px;top:375px;width:606px;height:1px;background:#e6e6e6"></div>
<div class="a" style="left:267px;top:392.7px;font-size:13.33px;line-height:15px;color:#374151;font-weight:bold;">Effecten</div>
<div class="a" style="left:267px;top:412.7px;font-size:13.33px;line-height:15px;color:#6b7280;font-weight:normal;">Utility</div>
<div class="a" style="left:575px;top:422px;width:298px;height:1px;background:#e6e6e6"></div>
<div class="inp sel" style="left:267px;top:429px;width:299px;height:16px;line-height:13px;">ELECTRICITY</div>
<div class="a" style="left:267px;top:469.2px;font-size:13.33px;line-height:15px;color:#374151;font-weight:bold;">Koppelingen (optioneel)</div>
<div class="a" style="left:575px;top:453px;width:143px;height:101px;border:1px solid #e8e8e8;border-radius:9px"></div>
<div class="a" style="left:584px;top:461.2px;font-size:13.33px;line-height:15px;color:#374151;font-weight:bold;">Investment</div>
<div class="a" style="left:584px;top:482.7px;font-size:13.33px;line-height:15px;color:#111;font-weight:normal;">Investment</div>
<div class="inp sel" style="left:584px;top:499px;width:126px;height:16px;line-height:13px;">— geen —</div>
<div class="a" style="left:584px;top:513.7px;font-size:13.33px;line-height:15px;color:#111;font-weight:normal;">Tx type</div>
<div class="inp sel dis" style="left:584px;top:530px;width:126px;height:15px;line-height:12px;">— selecteer —</div>
<div class="a" style="left:729px;top:453px;width:144px;height:101px;border:1px solid #e8e8e8;border-radius:9px"></div>
<div class="a" style="left:738px;top:461.2px;font-size:13.33px;line-height:15px;color:#374151;font-weight:bold;">Loan</div>
<div class="a" style="left:738px;top:482.7px;font-size:13.33px;line-height:15px;color:#111;font-weight:normal;">Loan</div>
<div class="inp sel" style="left:738px;top:499px;width:126px;height:16px;line-height:13px;">— geen —</div>
<div class="a" style="left:738px;top:513.7px;font-size:13.33px;line-height:15px;color:#111;font-weight:normal;">Tx type</div>
<div class="inp sel dis" style="left:738px;top:530px;width:126px;height:15px;line-height:12px;">— selecteer —</div>
<div class="a" style="left:267px;top:561.7px;font-size:13.33px;line-height:15px;color:#111;font-weight:normal;">Override bedrag (EUR)</div>
<div class="a" style="left:421px;top:561.7px;font-size:13.33px;line-height:15px;color:#111;font-weight:normal;">Nota</div>
<div class="a" style="left:574px;top:561.7px;font-size:13.33px;line-height:15px;color:#6b7280;font-weight:normal;">Gebouw koppelen</div>
<div class="inp " style="left:267px;top:578px;width:145px;height:17px;line-height:14px;"><span class="ph">leeg = payment.amount</span></div>
<div class="inp " style="left:421px;top:578px;width:145px;height:17px;line-height:14px;"><span class="ph">optioneel</span></div>
<div class="inp sel" style="left:574px;top:578px;width:299px;height:16px;line-height:13px;">Residentie de morgenzon</div>
<div class="a" style="left:267px;top:596.7px;font-size:10.83px;line-height:12px;color:#111;font-weight:normal;">Gebruik dit om het Tx-bedrag</div>
<div class="a" style="left:267px;top:611.7px;font-size:10.83px;line-height:12px;color:#111;font-weight:normal;">expliciet te zetten.</div>
<div class="a" style="left:267px;top:624.7px;font-size:13.33px;line-height:15px;color:#111;font-weight:normal;">Koppel aan lease (optioneel)</div>
<div class="inp sel" style="left:267px;top:640px;width:606px;height:16px;line-height:13px;">— geen —</div>
<div class="cbc" style="left:297px;top:673px"></div>
<div class="a" style="left:344px;top:655.2px;font-size:13.33px;line-height:15px;color:#111;font-weight:normal;">Markeer</div>
<div class="a" style="left:344px;top:670.2px;font-size:13.33px;line-height:15px;color:#111;font-weight:normal;">als recup-</div>
<div class="a" style="left:344px;top:685.2px;font-size:13.33px;line-height:15px;color:#111;font-weight:normal;">kost</div>
<div class="cb" style="left:510px;top:673px"></div>
<div class="a" style="left:574px;top:655.2px;font-size:13.33px;line-height:15px;color:#111;font-weight:normal;">Eenmalige kost</div>
<div class="a" style="left:574px;top:670.2px;font-size:13.33px;line-height:15px;color:#111;font-weight:normal;">(isOneTime)</div>
<div class="a" style="left:574px;top:685.2px;font-size:13.33px;line-height:15px;color:#111;font-weight:normal;">zetten</div>
<div class="a" style="left:725px;top:670.2px;font-size:13.33px;line-height:15px;color:#6b7280;font-weight:normal;">Prioriteit</div>
<div class="inp " style="left:773px;top:670px;width:100px;height:18px;line-height:15px;">100</div>
<div class="cbc" style="left:282px;top:711px"></div>
<div class="a" style="left:315px;top:700.2px;font-size:13.33px;line-height:15px;color:#111;font-weight:normal;">Regel</div>
<div class="a" style="left:315px;top:714.7px;font-size:13.33px;line-height:15px;color:#111;font-weight:normal;">actief</div>
<div class="a" style="left:256px;top:741px;width:627px;height:1px;background:#ececec"></div>
<div class="a" style="left:906px;top:203.7px;font-size:10.83px;line-height:12px;color:#333;font-weight:bold;">Scope &amp; Preview</div>
<div class="a" style="left:906px;top:222.7px;font-size:13.33px;line-height:15px;color:#6b7280;font-weight:normal;">Van</div>
<div class="a" style="left:1117px;top:222.7px;font-size:13.33px;line-height:15px;color:#6b7280;font-weight:normal;">Tot</div>
<div class="inp date" style="left:906px;top:239px;width:203px;height:17px;line-height:14px;padding-left:2.5px"><span class="mono" style="font-size:10.6px;color:#111">dd/mm/jjjj</span><svg class="a" style="right:5px;top:50%;margin-top:-5.5px" width="9" height="10" viewBox="0 0 9 10"><path d="M2.5 0v2M6.5 0v2" stroke="#111" stroke-width="1.2"/><rect x=".65" y="1.65" width="7.7" height="7.7" rx="1" fill="none" stroke="#111" stroke-width="1.3"/><rect x=".65" y="1.65" width="7.7" height="2.2" fill="#111"/></svg></div>
<div class="inp date" style="left:1117px;top:239px;width:203px;height:17px;line-height:14px;padding-left:2.5px"><span class="mono" style="font-size:10.6px;color:#111">dd/mm/jjjj</span><svg class="a" style="right:5px;top:50%;margin-top:-5.5px" width="9" height="10" viewBox="0 0 9 10"><path d="M2.5 0v2M6.5 0v2" stroke="#111" stroke-width="1.2"/><rect x=".65" y="1.65" width="7.7" height="7.7" rx="1" fill="none" stroke="#111" stroke-width="1.3"/><rect x=".65" y="1.65" width="7.7" height="2.2" fill="#111"/></svg></div>
<div class="a" style="left:906px;top:255.7px;font-size:13.33px;line-height:15px;color:#6b7280;font-weight:normal;">Status in scope</div>
<div class="pill" style="left:907px;top:272px;width:64px;height:23px;border-color:#dedede;border-radius:12px"></div>
<div class="cbc" style="left:916px;top:278px"></div>
<div class="a" style="left:932px;top:276px;font-size:13.33px;line-height:14px;color:#1e3a8a;background:#e3ebfa">NEW</div>
<div class="pill" style="left:982px;top:272px;width:112px;height:23px;border-color:#dedede;border-radius:12px"></div>
<div class="cbc" style="left:991px;top:278px"></div>
<div class="a" style="left:1007px;top:276px;font-size:13.33px;line-height:14px;color:#1e3a8a;background:#e3ebfa">SUGGESTED</div>
<div class="pill" style="left:1105px;top:272px;width:110px;height:23px;border-color:#dedede;border-radius:12px"></div>
<div class="cbc" style="left:1114px;top:278px"></div>
<div class="a" style="left:1130px;top:276px;font-size:13.33px;line-height:14px;color:#1e3a8a;background:#e3ebfa">PROCESSED</div>
<div class="pill" style="left:912px;top:301px;width:94px;height:23px;border-color:#dedede;border-radius:12px"></div>
<div class="cb" style="left:921px;top:307px"></div>
<div class="a" style="left:936px;top:304.2px;font-size:13.33px;line-height:15px;color:#111;font-weight:normal;">IGNORED</div>
<div class="cb" style="left:945px;top:342px"></div>
<div class="a" style="left:1000px;top:323.7px;font-size:13.33px;line-height:15px;color:#111;font-weight:normal;">Overschrijf</div>
<div class="a" style="left:1000px;top:338.7px;font-size:13.33px;line-height:15px;color:#111;font-weight:normal;">bestaande</div>
<div class="a" style="left:1000px;top:353.7px;font-size:13.33px;line-height:15px;color:#111;font-weight:normal;">velden</div>
<div class="cb" style="left:1117px;top:342px"></div>
<div class="a" style="left:1162px;top:323.7px;font-size:13.33px;line-height:15px;color:#111;font-weight:normal;">Markeer</div>
<div class="a" style="left:1162px;top:338.7px;font-size:13.33px;line-height:15px;color:#111;font-weight:normal;">als</div>
<div class="a" style="left:1162px;top:353.7px;font-size:13.33px;line-height:15px;color:#111;font-weight:normal;">verwerkt</div>
<div class="a sans" style="left:907px;top:370px;width:79px;height:29px;border:1px solid #e0e0e0;border-radius:6px;background:#fff;font-size:11.11px;line-height:27px;color:#111;padding-left:27px">Preview</div>
<svg class="a" style="left:917px;top:377px" width="15" height="15" viewBox="0 0 15 15"><circle cx="6" cy="6" r="4.2" fill="#cfe3f7" stroke="#3a6ea5" stroke-width="1.8"/><path d="M9 9l4.5 4.5" stroke="#2d4f73" stroke-width="2.6" stroke-linecap="round"/></svg>
<div class="a sans" style="left:992px;top:370px;width:146px;height:29px;border-radius:6px;background:#2563eb;font-size:11.11px;line-height:29px;color:#fff;padding-left:29px;-webkit-text-stroke:.25px #fff">Opslaan &amp; toepassen</div>
<div class="a" style="left:1004px;top:378px;width:13px;height:13px;background:#22b53a;border:1.2px solid #1b3a1b;border-radius:1.5px"></div>
<div class="a" style="left:1008px;top:379.5px;width:4.5px;height:7.5px;border-right:2.2px solid #fff;border-bottom:2.2px solid #fff;transform:rotate(45deg)"></div>
<div class="a sans" style="left:1145px;top:370px;width:68px;height:29px;border:1px solid #e0e0e0;border-radius:6px;background:#fff;font-size:11.11px;line-height:27px;color:#111;text-align:center">Annuleren</div>
<div class="a" style="left:906px;top:398px;font-size:13.33px;line-height:16px;color:#6b7280"><b style="color:#111">Preview</b>kandidaten: 176 • matches: 30</div>
<div class="a" style="left:906px;top:414px;width:413px;height:216px;background:#fdfdfd"></div>
<div class="a" style="left:909px;top:415.2px;font-size:13.33px;line-height:15px;color:#111;font-weight:bold;">Datum</div>
<div class="a" style="left:951px;top:415.2px;font-size:13.33px;line-height:15px;color:#111;font-weight:bold;">Bedrag</div>
<div class="a" style="left:1001px;top:415.2px;font-size:13.33px;line-height:15px;color:#111;font-weight:bold;">Contact</div>
<div class="a" style="left:1142px;top:415.2px;font-size:13.33px;line-height:15px;color:#111;font-weight:bold;">Comment</div>
<div class="a" style="left:1289px;top:415px;width:18px;overflow:hidden;font-size:13.33px;line-height:16px;font-weight:bold">Boekhouding</div>
<div class="a" style="left:906px;top:432px;width:402px;height:185px;overflow:hidden">
<div class="a" style="left:3px;top:2.0px;font-size:13.33px;line-height:15px">2025-<br>10-06</div>
<div class="a" style="left:40px;top:9.5px;width:47px;text-align:right;font-size:13.33px;line-height:15px">87,59</div>
<div class="a" style="left:91px;top:2.0px;font-size:13.33px;line-height:15px">Electrabel<br>nv/sa</div>
<div class="a" style="left:147px;top:10.0px;font-size:13.33px;line-height:15px">EUROPESE DOMICILIERING VAN E…</div>
<div class="a" style="left:3px;top:35.3px;font-size:13.33px;line-height:15px">2025-<br>09-09</div>
<div class="a" style="left:40px;top:42.8px;width:47px;text-align:right;font-size:13.33px;line-height:15px">87,59</div>
<div class="a" style="left:91px;top:35.3px;font-size:13.33px;line-height:15px">Electrabel<br>nv/sa</div>
<div class="a" style="left:147px;top:43.3px;font-size:13.33px;line-height:15px">EUROPESE DOMICILIERING VAN E…</div>
<div class="a" style="left:3px;top:68.6px;font-size:13.33px;line-height:15px">2025-<br>08-04</div>
<div class="a" style="left:40px;top:76.1px;width:47px;text-align:right;font-size:13.33px;line-height:15px">87,59</div>
<div class="a" style="left:91px;top:68.6px;font-size:13.33px;line-height:15px">Electrabel<br>nv/sa</div>
<div class="a" style="left:147px;top:76.6px;font-size:13.33px;line-height:15px">EUROPESE DOMICILIERING VAN E…</div>
<div class="a" style="left:3px;top:101.9px;font-size:13.33px;line-height:15px">2025-<br>07-07</div>
<div class="a" style="left:40px;top:109.4px;width:47px;text-align:right;font-size:13.33px;line-height:15px">87,59</div>
<div class="a" style="left:91px;top:101.9px;font-size:13.33px;line-height:15px">Electrabel<br>nv/sa</div>
<div class="a" style="left:147px;top:109.9px;font-size:13.33px;line-height:15px">EUROPESE DOMICILIERING VAN E…</div>
<div class="a" style="left:3px;top:135.2px;font-size:13.33px;line-height:15px">2025-<br>06-04</div>
<div class="a" style="left:40px;top:142.7px;width:47px;text-align:right;font-size:13.33px;line-height:15px">87,59</div>
<div class="a" style="left:91px;top:135.2px;font-size:13.33px;line-height:15px">Electrabel<br>nv/sa</div>
<div class="a" style="left:147px;top:143.2px;font-size:13.33px;line-height:15px">EUROPESE DOMICILIERING VAN E…</div>
<div class="a" style="left:3px;top:168.5px;font-size:13.33px;line-height:15px">2025-<br>05-06</div>
<div class="a" style="left:40px;top:176.0px;width:47px;text-align:right;font-size:13.33px;line-height:15px">115,07</div>
<div class="a" style="left:91px;top:168.5px;font-size:13.33px;line-height:15px">Electrabel<br>nv/sa</div>
<div class="a" style="left:147px;top:176.5px;font-size:13.33px;line-height:15px">EUROPESE DOMICILIERING VAN E…</div>
</div>
<svg class="a" style="left:1308px;top:417px" width="9" height="6"><path d="M0.5 5.5L4.5 0.5L8.5 5.5z" fill="#505050"/></svg>
<div class="a" style="left:1309px;top:429px;width:8px;height:51px;background:#8a8a8a;border-radius:4px"></div>
<svg class="a" style="left:1308px;top:605px" width="9" height="6"><path d="M0.5 0.5L4.5 5.5L8.5 0.5z" fill="#505050"/></svg>
<svg class="a" style="left:909px;top:619px" width="6" height="9"><path d="M5.5 0.5L0.5 4.5L5.5 8.5z" fill="#505050"/></svg>
<div class="a" style="left:922px;top:620px;width:342px;height:8px;background:#8a8a8a;border-radius:4px"></div>
<svg class="a" style="left:1297px;top:619px" width="6" height="9"><path d="M0.5 0.5L5.5 4.5L0.5 8.5z" fill="#505050"/></svg>
<div class="a" style="left:896px;top:640px;width:434px;height:1px;background:#ececec"></div>
<div class="a" style="left:0px;top:866px;width:1600px;height:33px;background:#1c2431"></div>
<svg class="a" style="left:12px;top:876px" width="14" height="14" viewBox="0 0 14 14"><path d="M0 1.9L5.7 1.1V6.6H0zM6.4 1L14 0V6.6H6.4zM0 7.3H5.7V12.9L0 12.1zM6.4 7.3H14V14L6.4 13z" fill="#fff"/></svg>
<div class="a" style="left:40px;top:866px;width:240px;height:33px;background:#f3f3f3"></div>
<svg class="a" style="left:49px;top:875px" width="15" height="15" viewBox="0 0 15 15"><circle cx="9" cy="6" r="4.6" fill="none" stroke="#222" stroke-width="1.3"/><path d="M5.7 9.3L1 14" stroke="#222" stroke-width="1.5"/></svg>
<div class="a sans" style="left:73px;top:874px;font-size:12.4px;line-height:16px;color:#333">Typ hier om te zoeken</div>
<svg class="a" style="left:291px;top:875px" width="16" height="15" viewBox="0 0 16 15"><rect x="3" y="3" width="8" height="9" fill="none" stroke="#fff" stroke-width="1.2"/><path d="M1 1h12M1 14h12M14 4v1M14 7v1M14 10v1" stroke="#fff" stroke-width="1.2"/></svg>
<svg class="a" style="left:330px;top:872px" width="22" height="22" viewBox="0 0 22 22"><path d="M6 2.5l13 2.2v10.5L6 13.5z" fill="#dfefff"/><path d="M7 3.8l11 1.9v8.6L7 12.6z" fill="#3aa6f0"/><path d="M9 14l3 .5v2l-3-.5z" fill="#bcd"/><path d="M1.5 17.5l9-1.2 3 2.4-9 1.3z" fill="#e8e8e8"/></svg>
<svg class="a" style="left:371px;top:872px" width="22" height="22" viewBox="0 0 22 22"><path d="M2 4h7l2 2h9v13H2z" fill="#e9b840"/><path d="M2 8h18v11H2z" fill="#f9d86a"/><path d="M7 14h8v5h-2v-3h-4v3H7z" fill="#3b8fd8"/></svg>
<div class="a" style="left:365px;top:897px;width:34px;height:2px;background:#8ab4e8"></div>
<svg class="a" style="left:412px;top:872px" width="22" height="22" viewBox="0 0 22 22"><circle cx="11" cy="12.2" r="8.6" fill="#ff5b2e"/><path d="M2.5 12a8.6 8.6 0 0 0 17 1.5c0-3-1.5-6-4-7.5 1 2 1 3.5.5 4.5" fill="#ff8a3a"/><path d="M13 1.5c3 1 6 4 6.5 8-1-2-2.5-3-3.5-3.5" fill="#ffd43a"/><circle cx="10.5" cy="12.5" r="4.4" fill="#7b3fe0"/><path d="M6.5 9c2-2 5-2 6.5 0-2 0-3.5 1-4 2.5z" fill="#ffb03a"/></svg>
<div class="a" style="left:406px;top:897px;width:34px;height:2px;background:#8ab4e8"></div>
<svg class="a" style="left:453px;top:872px" width="22" height="22" viewBox="0 0 22 22"><path d="M10 4c6 0 10 3 10 7 0 3-3 3-4 3s-2 1-1 2.5-1 3.5-5 3.5c-5 0-9-3-9-8s4-8 9-8z" fill="#dfe9f2"/><circle cx="6" cy="11" r="1.6" fill="#e23b3b"/><circle cx="8.5" cy="7.5" r="1.6" fill="#3ab54a"/><circle cx="12.5" cy="7" r="1.5" fill="#f3c23a"/><circle cx="8" cy="15" r="1.4" fill="#333"/><path d="M11 19L19 2" stroke="#c98b3a" stroke-width="2"/><path d="M18 4l2-3" stroke="#e86" stroke-width="2.2"/></svg>
<div class="a" style="left:447px;top:897px;width:34px;height:2px;background:#8ab4e8"></div>
<svg class="a" style="left:494px;top:872px" width="22" height="22" viewBox="0 0 22 22"><rect x="1.5" y="1.5" width="17" height="14" fill="#34495a"/><rect x="1.5" y="1.5" width="17" height="2" fill="#4f7fa8"/><path d="M4 7h6M4 9.5h4M4 12h5" stroke="#6a8a5a" stroke-width=".8"/><path d="M11 10.5c0-2 1-2.5 3-2.5h2.5c1.5 0 2.5 1 2.5 2.5v3h-5.5c-1.5 0-2.5 1-2.5 2.5z" fill="#3f7cc0"/><path d="M21 15.5c0 2-1 2.5-3 2.5h-2.5c-1.5 0-2.5-1-2.5-2.5v-2h5.5c1.5 0 2.5-1 2.5-2.5z" fill="#f5d04a"/></svg>
<svg class="a" style="left:535px;top:872px" width="22" height="22" viewBox="0 0 22 22"><path d="M8 2h9l3 3v15H8z" fill="#f5f5f5" stroke="#9aa" stroke-width=".8"/><path d="M10 9h8M10 12h8M10 15h8" stroke="#f0b43c" stroke-width="1.5"/><path d="M1 10h6l-2-3M7 10l-2 3" stroke="#f06c2a" stroke-width="2.2" fill="none"/></svg>
<svg class="a" style="left:576px;top:872px" width="22" height="22" viewBox="0 0 22 22"><circle cx="11" cy="11" r="9.8" fill="#fff" stroke="#ddd" stroke-width=".6" stroke-dasharray="1.5 1"/><path d="M6.5 17L11 4.5 15.5 17M8 13h6" stroke="#3a6fd8" stroke-width="1.9" fill="none"/><path d="M15 11.5l3 1-3 1z" fill="#3aa05a"/></svg>
<svg class="a" style="left:616px;top:872px" width="22" height="22" viewBox="0 0 22 22"><path d="M3 3h15l2 2v12H3z" fill="#f7e3a0"/><path d="M3 7h17v10H3z" fill="#f2c552"/><path d="M3 7l8.5 6L20 7" fill="none" stroke="#d99a20" stroke-width="1.2"/><circle cx="11.5" cy="16" r="4.3" fill="#f5c230" stroke="#a87010" stroke-width=".8"/><path d="M9.5 15.5l2 1.5 2-2" stroke="#7a4a00" fill="none" stroke-width="1"/></svg>
<svg class="a" style="left:657px;top:872px" width="22" height="22" viewBox="0 0 22 22"><circle cx="11" cy="11" r="9.5" fill="#db4437"/><path d="M11 11L19.2 6.3A9.5 9.5 0 0 1 11 20.5z" fill="#f4b400"/><path d="M11 11L11 20.5A9.5 9.5 0 0 1 2.8 6.3z" fill="#0f9d58"/><circle cx="11" cy="11" r="4.5" fill="#fff"/><circle cx="11" cy="11" r="3.4" fill="#4285f4"/></svg>
<div class="a" style="left:651px;top:897px;width:34px;height:2px;background:#8ab4e8"></div>
<svg class="a" style="left:698px;top:872px" width="22" height="22" viewBox="0 0 22 22"><ellipse cx="11" cy="12" rx="8.5" ry="8" fill="#3ec56a"/><rect x="0.5" y="9.5" width="21" height="3" fill="#a8b0b8"/><path d="M14.5 1L7 12.5h5L9 21l8.5-11.5h-5z" fill="#7ef0b0" stroke="#eafff2" stroke-width=".6"/></svg>
<svg class="a" style="left:739px;top:872px" width="22" height="22" viewBox="0 0 22 22"><path d="M16 1l5 2.5v15L16 21 6 12l-3.5 3L1 14V8l1.5-1L6 10zM16 6.5L10 11l6 4.5z" fill="#1a8ae6"/></svg>
<div class="a" style="left:733px;top:897px;width:34px;height:2px;background:#8ab4e8"></div>
<svg class="a" style="left:779px;top:872px" width="22" height="22" viewBox="0 0 22 22"><path d="M20.5 12.5C20.5 6 16.5 2 11 2S1.5 6 1.5 11.5c0 5 4 9.5 9.5 9.5 4 0 7.5-2 9-5-3 1.5-8 1.5-9.5-2.5 4 1.5 10 .5 10-1z" fill="#1f8fd8"/><path d="M20.5 12.5C20.5 6 16.5 2 11 2 15 2 18 5 18 8.5c0 1.5-1.5 3-4 3 2.5 1.5 6.5 2 6.5 1z" fill="#4cd08a"/><circle cx="7.5" cy="16.5" r="4" fill="#c8c8c8" stroke="#fff" stroke-width=".8"/><circle cx="7.5" cy="15.3" r="1.5" fill="#eee"/></svg>
<div class="a" style="left:773px;top:897px;width:34px;height:2px;background:#8ab4e8"></div>
<svg class="a" style="left:820px;top:872px" width="22" height="22" viewBox="0 0 22 22"><rect x="1.5" y="3.5" width="19" height="15" fill="#000" stroke="#9aa" stroke-width="1"/><rect x="1.5" y="3.5" width="19" height="2" fill="#c8ccd0"/><path d="M3.5 8h4M3.5 10h3M11 12h4" stroke="#ddd" stroke-width=".9"/></svg>
<div class="a" style="left:814px;top:897px;width:34px;height:2px;background:#8ab4e8"></div>
<svg class="a" style="left:861px;top:872px" width="22" height="22" viewBox="0 0 22 22"><path d="M5 2h11l3 3v16H5z" fill="#eef3fb" stroke="#7a9ad0" stroke-width=".8"/><path d="M8 9h9M8 12h9M8 15h9M8 18h9" stroke="#3a62b0" stroke-width="1"/><path d="M2 4.5l10-1.5v14l-10-1.5z" fill="#2f5eb8"/><path d="M3.5 7.5l1.5 6 1.5-4.5 1.5 4.5 1.5-6" stroke="#fff" fill="none" stroke-width="1.1"/></svg>
<div class="a" style="left:855px;top:897px;width:34px;height:2px;background:#8ab4e8"></div>
<svg class="a" style="left:902px;top:872px" width="22" height="22" viewBox="0 0 22 22"><path d="M3 2h13l3 3v16H3z" fill="#f4f8ee" stroke="#9ab07a" stroke-width=".8"/><path d="M3 11h16v10H3z" fill="#5cc23a"/><rect x="5.5" y="6" width="2" height="9" fill="#3a6a2a"/><path d="M9 10h3" stroke="#3a6a2a" stroke-width="1"/><path d="M13 17L21 3" stroke="#e8b020" stroke-width="2.3"/></svg>
<div class="a" style="left:896px;top:897px;width:34px;height:2px;background:#8ab4e8"></div>
<svg class="a" style="left:942px;top:872px" width="22" height="22" viewBox="0 0 22 22"><rect x="8" y="1.5" width="13" height="9" fill="#3aa8e8"/><rect x="12" y="10.5" width="5" height="1.5" fill="#9ab"/><rect x="1" y="7" width="8" height="6" fill="#2f8fe0" stroke="#cfe6ff" stroke-width=".6"/><rect x="4" y="13" width="9" height="5" fill="#ddd"/><path d="M10 16.5l5 4 3-4" stroke="#4bd04b" stroke-width="2.2" fill="none"/></svg>
<div class="a" style="left:936px;top:897px;width:34px;height:2px;background:#8ab4e8"></div>
<div class="a" style="left:974px;top:866px;width:40px;height:33px;background:#3a4250"></div>
<svg class="a" style="left:983px;top:872px" width="22" height="22" viewBox="0 0 22 22"><circle cx="11" cy="11" r="9.5" fill="#2d7fd3"/><circle cx="11" cy="11" r="7" fill="#4a9be8" stroke="#1f5fa8" stroke-width="1"/><path d="M7 15.5V10l4-3.2L15 10v5.5z" fill="none" stroke="#1f5fa8" stroke-width="1.2"/></svg>
<div class="a" style="left:977px;top:897px;width:34px;height:2px;background:#8ab4e8"></div>
<svg class="a" style="left:1231px;top:875px" width="22" height="16" viewBox="0 0 22 16"><path d="M5 15a4.5 4.5 0 0 1-.5-9A6.5 6.5 0 0 1 16.8 5 5 5 0 0 1 17 15z" fill="#a8c8f4"/></svg>
<div class="a sans" style="left:1259px;top:874px;font-size:11.6px;line-height:16px;color:#fff">15°C&nbsp; Bewolkt</div>
<svg class="a" style="left:1349px;top:877px" width="12" height="8" viewBox="0 0 12 8"><path d="M1 7L6 2l5 5" fill="none" stroke="#fff" stroke-width="1.3"/></svg>
<svg class="a" style="left:1368px;top:875px" width="15" height="15" viewBox="0 0 15 15"><circle cx="7.5" cy="7.5" r="6" fill="none" stroke="#fff" stroke-width="1.5"/><circle cx="7.5" cy="7.5" r="3" fill="#fff"/></svg>
<svg class="a" style="left:1390px;top:874px" width="14" height="17" viewBox="0 0 14 17"><rect x="2" y="4" width="8" height="9" rx="1" fill="none" stroke="#fff" stroke-width="1.2"/><path d="M10 6l3-1.5v8L10 11" fill="none" stroke="#fff" stroke-width="1.2"/><path d="M5 1.5h3M5 15.5h3" stroke="#fff" stroke-width="1"/></svg>
<svg class="a" style="left:1409px;top:875px" width="18" height="15" viewBox="0 0 18 15"><rect x="3" y="4" width="13" height="8" fill="none" stroke="#fff" stroke-width="1.3"/><rect x="5" y="6" width="7" height="4" fill="#fff"/><path d="M1 7h2M3 2v3" stroke="#fff" stroke-width="1.2"/></svg>
<svg class="a" style="left:1430px;top:876px" width="16" height="14" viewBox="0 0 16 14"><path d="M2 13a11 11 0 0 1 11-11M5 13a8 8 0 0 1 8-8M8 13a5 5 0 0 1 5-5" fill="none" stroke="#fff" stroke-width="1.2"/><circle cx="12" cy="12" r="1.3" fill="#fff"/></svg>
<svg class="a" style="left:1447px;top:875px" width="18" height="15" viewBox="0 0 18 15"><path d="M1 5h3l4-3.5v12L4 10H1z" fill="none" stroke="#fff" stroke-width="1.2"/><path d="M11 5a3 3 0 0 1 0 5M13 3a6 6 0 0 1 0 9" fill="none" stroke="#fff" stroke-width="1.2"/></svg>
<div class="a sans" style="left:1471px;top:874px;font-size:10.5px;line-height:16px;color:#fff">NLD</div>
<div class="a sans" style="left:1490px;top:867px;width:72px;text-align:center;font-size:10px;line-height:15px;color:#fff">16:27<br>19/10/2025</div>
<svg class="a" style="left:1562px;top:873px" width="22" height="22" viewBox="0 0 22 22"><path d="M2 2h15v11H8l-4 3v-3H2z" fill="#fff"/><path d="M5 5h9M5 8h9M5 11h5" stroke="#1c2431" stroke-width="1"/><circle cx="15" cy="15" r="5.5" fill="#333" stroke="#fff" stroke-width="1"/><text x="15" y="18.5" font-size="9" text-anchor="middle" fill="#fff" font-family="Liberation Sans">1</text></svg>
<div class="a" style="left:1597px;top:866px;width:3px;height:33px;background:#1c2431"></div>
<div class="a" style="left:1586px;top:19px;width:14px;height:847px;background:#fff"></div>
<div class="a" style="left:1588px;top:34px;width:8px;height:761px;background:#8b8b8b;border-radius:4px"></div>
<svg class="a" style="left:1587px;top:24px" width="10" height="6"><path d="M0.5 5.5L5 0.5L9.5 5.5z" fill="#888"/></svg>
<svg class="a" style="left:1587px;top:855px" width="10" height="6"><path d="M0.5 0.5L5 5.5L9.5 0.5z" fill="#888"/></svg>
<div class="a" style="left:1597px;top:19px;width:3px;height:847px;background:#c9d1ea"></div>
<div class="a" style="left:1597px;top:19px;width:3px;height:19px;background:#2b74cc"></div>
<div class="a" style="left:1597px;top:38px;width:3px;height:77px;background:#f4f4f4"></div>
<div class="a" style="left:0px;top:0px;width:1600px;height:19px;background:#fff"></div>
<svg class="a" style="left:2px;top:3px" width="13" height="13" viewBox="0 0 13 13"><circle cx="6.3" cy="6" r="5.6" fill="#4a8fd2"/><path d="M3.6 9.4V5.6L6.3 3.3 9 5.6v3.8" fill="none" stroke="#dceeff" stroke-width="1.1"/><path d="M5.2 9.4V7.4h1v2M7.2 9.4V6.6" stroke="#dceeff" stroke-width=".9"/></svg>
<div class="a sans" style="left:19.5px;top:2.5px;font-size:10px;line-height:15px;color:#000">RentCockpit</div>
<div class="a" style="left:1497px;top:8px;width:9px;height:1px;background:#000"></div>
<svg class="a" style="left:1534px;top:3px" width="12" height="12" viewBox="0 0 12 12"><rect x="1.5" y="3.5" width="7" height="7" fill="none" stroke="#000" stroke-width="1"/><path d="M3.5 3.5V1.5h7v7h-2" fill="none" stroke="#000" stroke-width="1"/></svg>
<svg class="a" style="left:1571px;top:3px" width="12" height="12" viewBox="0 0 12 12"><path d="M1 1L11 11M11 1L1 11" stroke="#000" stroke-width="1.1"/></svg></body></html>
